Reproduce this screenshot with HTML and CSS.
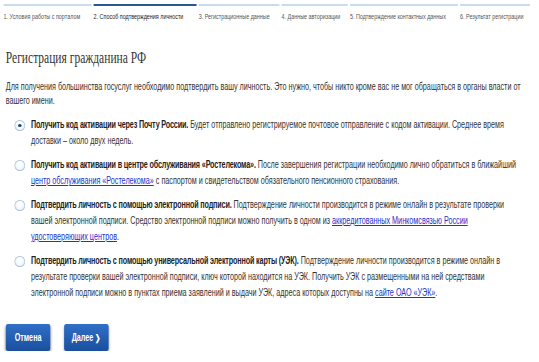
FILE: index.html
```html
<!DOCTYPE html>
<html lang="ru">
<head>
  <meta charset="UTF-8">
  <title>Регистрация гражданина РФ</title>
  <link rel="stylesheet" href="styles.css">
</head>
<body>
  <div class="page">
    <div class="steps">
      <div class="step">1. Условия работы с порталом</div>
      <div class="step active">2. Способ подтверждения личности</div>
      <div class="step">3. Регистрационные данные</div>
      <div class="step">4. Данные авторизации</div>
      <div class="step">5. Подтверждение контактных данных</div>
      <div class="step">6. Результат регистрации</div>
    </div>

    <div class="content">
      <h1>Регистрация гражданина РФ</h1>
      <p class="intro">Для получения большинства госуслуг необходимо подтвердить вашу личность. Это нужно, чтобы никто кроме вас не мог обращаться в органы власти от вашего имени.</p>

      <div class="options">
        <label class="option">
          <span class="radio checked"></span>
          <span class="text"><b>Получить код активации через Почту России.</b> Будет отправлено регистрируемое почтовое отправление с кодом активации. Среднее время доставки – около двух недель.</span>
        </label>
        <label class="option">
          <span class="radio"></span>
          <span class="text"><b>Получить код активации в центре обслуживания «Ростелекома».</b> После завершения регистрации необходимо лично обратиться в ближайший <a href="#">центр обслуживания «Ростелекома»</a> с паспортом и свидетельством обязательного пенсионного страхования.</span>
        </label>
        <label class="option">
          <span class="radio"></span>
          <span class="text"><b>Подтвердить личность с помощью электронной подписи.</b> Подтверждение личности производится в режиме онлайн в результате проверки вашей электронной подписи. Средство электронной подписи можно получить в одном из <a href="#">аккредитованных Минкомсвязью России удостоверяющих центров</a>.</span>
        </label>
        <label class="option">
          <span class="radio"></span>
          <span class="text"><b>Подтвердить личность с помощью универсальной электронной карты (УЭК).</b> Подтверждение личности производится в режиме онлайн в результате проверки вашей электронной подписи, ключ которой находится на УЭК. Получить УЭК с размещенными на ней средствами электронной подписи можно в пунктах приема заявлений и выдачи УЭК, адреса которых доступны на <a href="#">сайте ОАО «УЭК»</a>.</span>
        </label>
      </div>

      <div class="buttons">
        <button class="btn">Отмена</button>
        <button class="btn">Далее <span class="arrow">&#10095;</span></button>
      </div>
    </div>
  </div>
</body>
</html>
```

FILE: styles.css
```css
html, body {
  overflow: hidden;
}

body {
  margin: 0;
  font-family: "Liberation Sans", Arial, sans-serif;
  color: #333;
  background: #fff;
}

/* the whole form is drawn horizontally squeezed */
.page {
  width: 749px;
  transform: scaleX(0.72);
  transform-origin: 0 0;
}

.steps {
  display: grid;
  grid-template-columns: 122px 143px 112px 92px 150px 97px;
  gap: 3px;
  padding: 4px 0 0 5px;
}

.step {
  border-top: 2px solid #c9dcef;
  padding-top: 6px;
  font-size: 7.5px;
  line-height: 10px;
  color: #555;
  white-space: nowrap;
}

.step.active {
  border-top-color: #2b5797;
  color: #222;
}

.content {
  padding: 0 24px 0 8px;
}

h1 {
  font-family: "Liberation Serif", serif;
  font-weight: normal;
  font-size: 16px;
  line-height: 20px;
  color: #333;
  margin: 26px 0 0;
}

.intro {
  font-size: 10px;
  line-height: 14px;
  margin: 12px 0 0;
}

.options {
  margin-top: 9px;
  padding-left: 12px;
}

.option {
  display: flex;
  gap: 8px;
  font-size: 10px;
  line-height: 16px;
  margin-bottom: 8px;
}

.option:last-child {
  margin-bottom: 0;
}

.radio {
  flex: none;
  width: 15px;
  height: 11px;
  margin-top: 3px;
  box-sizing: border-box;
  border: 1px solid #a9c3e2;
  border-radius: 50%;
  background: radial-gradient(circle at 50% 35%, #fff 30%, #dde8f5 100%);
  position: relative;
}

.radio.checked::after {
  content: "";
  position: absolute;
  left: 4px;
  top: 3px;
  width: 5px;
  height: 3px;
  border-radius: 50%;
  background: #1d3f7a;
}

.text b {
  color: #222;
  letter-spacing: -0.2px;
}

.text a {
  color: #2233cc;
}

.buttons {
  display: flex;
  gap: 19px;
  margin-top: 23px;
}

.btn {
  width: 62px;
  height: 27px;
  border: none;
  border-radius: 3px;
  background: linear-gradient(#2f6fc6, #1b4f9e);
  box-shadow: 0 2px 3px rgba(0,0,0,0.35);
  color: #fff;
  font-family: inherit;
  font-size: 10px;
  font-weight: bold;
  padding: 0;
}

.arrow {
  font-size: 9px;
}
```
